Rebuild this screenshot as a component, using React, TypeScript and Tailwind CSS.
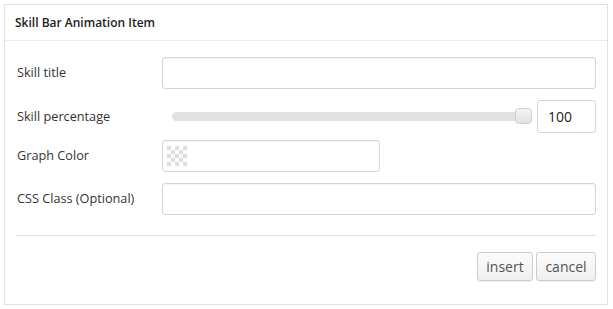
const Checker = () => (
  <svg width="20" height="20" viewBox="0 0 20 20" className="block">
    {[0, 1, 2, 3, 4].flatMap((r) =>
      [0, 1, 2, 3, 4].map((c) =>
        (r + c) % 2 === 0 ? (
          <rect key={`${r}-${c}`} x={c * 4} y={r * 4} width="4" height="4" fill="#dedede" />
        ) : null
      )
    )}
  </svg>
);

const App = () => {
  const field =
    'h-[32px] rounded-[3px] border border-[#d4d4d4] bg-white shadow-[inset_0_1px_1px_rgba(0,0,0,0.04)]';
  const btn =
    'h-[29px] rounded-[3px] border border-[#cccccc] bg-gradient-to-b from-[#fbfbfb] to-[#f0f0f0] text-[14px] text-[#555] shadow-[0_1px_0_rgba(0,0,0,0.05)]';

  return (
    <div className="w-[613px] h-[309px] bg-white p-[4px] pr-[5px] font-['Open_Sans',sans-serif] text-[#333]">
      <div className="h-[301px] border border-[#e1e1e1] bg-white">
        {/* Header */}
        <div className="h-[36px] border-b border-[#ececec] pl-[10px] flex items-center">
          <h1 className="text-[12px] font-semibold text-[#222]">Skill Bar Animation Item</h1>
        </div>

        {/* Fields */}
        <div className="pl-[12px] pr-[11px]">
          <div className="flex items-center mt-[16px]">
            <label className="w-[145px] text-[12.7px]">Skill title</label>
            <div className={`${field} flex-1`} />
          </div>

          <div className="flex items-center mt-[11px] h-[33px]">
            <label className="w-[145px] text-[12.7px]">Skill percentage</label>
            <div className="flex-1 flex items-center pl-[10px]">
              <div className="relative flex-1 h-[9px] rounded-full bg-[#e1e1e1]">
                <div className="absolute right-[-4px] top-[-4px] w-[17px] h-[16px] rounded-[4px] border border-[#cfcfcf] bg-gradient-to-b from-[#f4f4f4] to-[#e2e2e2]" />
              </div>
              <div className="ml-[9px] w-[59px] h-[33px] rounded-[3px] border border-[#d4d4d4] bg-white flex items-center pl-[10px] text-[14px] text-[#222]">
                100
              </div>
            </div>
          </div>

          <div className="flex items-center mt-[7px]">
            <label className="w-[145px] text-[12.7px]">Graph Color</label>
            <div className={`${field} w-[218px] flex items-center pl-[4px]`}>
              <Checker />
            </div>
          </div>

          <div className="flex items-center mt-[11px]">
            <label className="w-[145px] text-[12.7px]">CSS Class (Optional)</label>
            <div className={`${field} flex-1`} />
          </div>

          <div className="mt-[20px] ml-[-1px] border-t border-[#e1e1e1]" />

          <div className="flex justify-end gap-[3px] mt-[16px]">
            <button className={`${btn} w-[56px]`}>insert</button>
            <button className={`${btn} w-[60px]`}>cancel</button>
          </div>
        </div>
      </div>
    </div>
  );
};

export default App;
